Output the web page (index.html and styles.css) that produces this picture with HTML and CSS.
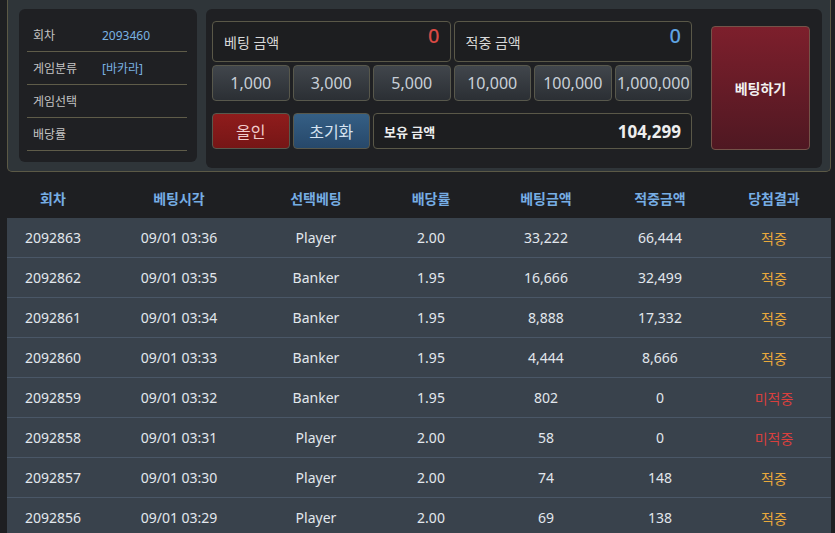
FILE: index.html
```html
<!DOCTYPE html>
<html lang="ko">
  <head>
    <meta charset="UTF-8" />
    <title>베팅</title>
    <link rel="stylesheet" href="styles.css">
  </head>
  <body>
    <div class="wrap">
      <div class="bet-panel">
        <div class="info-box">
          <div class="info-row">
            <span class="info-label">회차</span>
            <span class="info-value">2093460</span>
          </div>
          <div class="info-row">
            <span class="info-label">게임분류</span>
            <span class="info-value">[바카라]</span>
          </div>
          <div class="info-row">
            <span class="info-label">게임선택</span>
            <span class="info-value"></span>
          </div>
          <div class="info-row">
            <span class="info-label">배당률</span>
            <span class="info-value"></span>
          </div>
        </div>
        <div class="bet-box">
          <div class="bet-controls">
            <div class="amount-row">
              <div class="amount-box">
                <span class="amount-label">베팅 금액</span>
                <span class="amount-value red">0</span>
              </div>
              <div class="amount-box">
                <span class="amount-label">적중 금액</span>
                <span class="amount-value blue">0</span>
              </div>
            </div>
            <div class="chip-row">
              <button class="chip">1,000</button>
              <button class="chip">3,000</button>
              <button class="chip">5,000</button>
              <button class="chip">10,000</button>
              <button class="chip">100,000</button>
              <button class="chip">1,000,000</button>
            </div>
            <div class="chip-row action-row">
              <button class="chip all-in">올인</button>
              <button class="chip reset">초기화</button>
              <div class="balance-box">
                <span class="balance-label">보유 금액</span>
                <span class="balance-value">104,299</span>
              </div>
            </div>
          </div>
          <button class="bet-button">베팅하기</button>
        </div>
      </div>

      <table class="history">
        <colgroup>
          <col style="width: 92px" />
          <col style="width: 160px" />
          <col style="width: 114px" />
          <col style="width: 116px" />
          <col style="width: 114px" />
          <col style="width: 114px" />
          <col />
        </colgroup>
        <thead>
          <tr>
            <th>회차</th>
            <th>베팅시각</th>
            <th>선택베팅</th>
            <th>배당률</th>
            <th>베팅금액</th>
            <th>적중금액</th>
            <th>당첨결과</th>
          </tr>
        </thead>
        <tbody>
          <tr><td>2092863</td><td>09/01 03:36</td><td>Player</td><td>2.00</td><td>33,222</td><td>66,444</td><td class="win">적중</td></tr>
          <tr><td>2092862</td><td>09/01 03:35</td><td>Banker</td><td>1.95</td><td>16,666</td><td>32,499</td><td class="win">적중</td></tr>
          <tr><td>2092861</td><td>09/01 03:34</td><td>Banker</td><td>1.95</td><td>8,888</td><td>17,332</td><td class="win">적중</td></tr>
          <tr><td>2092860</td><td>09/01 03:33</td><td>Banker</td><td>1.95</td><td>4,444</td><td>8,666</td><td class="win">적중</td></tr>
          <tr><td>2092859</td><td>09/01 03:32</td><td>Banker</td><td>1.95</td><td>802</td><td>0</td><td class="lose">미적중</td></tr>
          <tr><td>2092858</td><td>09/01 03:31</td><td>Player</td><td>2.00</td><td>58</td><td>0</td><td class="lose">미적중</td></tr>
          <tr><td>2092857</td><td>09/01 03:30</td><td>Player</td><td>2.00</td><td>74</td><td>148</td><td class="win">적중</td></tr>
          <tr><td>2092856</td><td>09/01 03:29</td><td>Player</td><td>2.00</td><td>69</td><td>138</td><td class="win">적중</td></tr>
        </tbody>
      </table>
    </div>
  </body>
</html>
```

FILE: styles.css
```css
body {
  margin: 0;
  background-color: #1e1f22;
  font-family: "Noto Sans", "Noto Sans CJK KR", sans-serif;
  color: #e2e7ed;
  overflow: hidden;
}
.wrap {
  margin: 0 4px 0 7px;
}
.bet-panel {
  display: flex;
  align-items: flex-start;
  gap: 9px;
  background-color: #2f3539;
  border: 1px solid #5b5946;
  border-top: none;
  border-radius: 0 0 5px 5px;
  padding: 9px 8px 3px 11px;
}
.info-box {
  width: 178px;
  box-sizing: border-box;
  height: 153px;
  background-color: #1f2023;
  border-radius: 6px;
  padding: 10px 10px 0 8px;
}
.info-row {
  display: flex;
  align-items: center;
  height: 32px;
  border-bottom: 1px solid #5f5c49;
  font-size: 12px;
}
.info-label {
  width: 69px;
  padding-left: 6px;
  color: #c4c4c4;
}
.info-value {
  color: #79b2e2;
}
.bet-box {
  flex: 1;
  display: flex;
  align-items: flex-start;
  gap: 19px;
  height: 159px;
  box-sizing: border-box;
  background-color: #1f2023;
  border-radius: 6px;
  padding: 12px 12px 0 6px;
}
.bet-controls {
  flex: 1;
}
.amount-row {
  display: grid;
  grid-template-columns: 1fr 1fr;
  gap: 3px;
}
.amount-box {
  display: flex;
  justify-content: space-between;
  height: 41px;
  box-sizing: border-box;
  border: 1px solid #5a5848;
  border-radius: 4px;
  background-color: #1d1e20;
  padding: 0 10px 0 11px;
}
.amount-label {
  align-self: center;
  margin-top: 1px;
  font-size: 14px;
  color: #d8d8d8;
}
.amount-value {
  margin-top: 0;
  font-size: 20px;
  font-weight: 500;
}
.amount-value.red {
  color: #d94a44;
}
.amount-value.blue {
  color: #5fa4e2;
}
.chip-row {
  display: grid;
  grid-template-columns: repeat(6, 1fr);
  gap: 3px;
  margin-top: 3px;
}
.action-row {
  margin-top: 12px;
}
.chip {
  height: 36px;
  border: 1px solid #58584c;
  border-radius: 4px;
  background: linear-gradient(#41464c, #2b2f34);
  color: #c9d0d8;
  font-family: inherit;
  font-size: 16px;
  padding: 0;
  cursor: pointer;
}
.chip.all-in {
  background: linear-gradient(#8f1c1c, #761616);
  color: #f1cccc;
}
.chip.reset {
  background: linear-gradient(#355f85, #27486a);
  color: #d5e3f1;
}
.balance-box {
  grid-column: 3 / 7;
  display: flex;
  align-items: center;
  justify-content: space-between;
  height: 36px;
  box-sizing: border-box;
  border: 1px solid #5a5848;
  border-radius: 4px;
  background-color: #1d1e20;
  padding: 0 10px 0 10px;
}
.balance-label {
  font-size: 13px;
  font-weight: bold;
  color: #eeeeee;
}
.balance-value {
  font-size: 17px;
  font-weight: bold;
  color: #eeeeee;
}
.bet-button {
  width: 99px;
  height: 124px;
  margin-top: 5px;
  border: 1px solid #745349;
  border-radius: 4px;
  background: linear-gradient(#7d1f2c, #4f1822);
  color: #f2f2f2;
  font-family: inherit;
  font-size: 14px;
  font-weight: bold;
  cursor: pointer;
}
.history {
  width: 100%;
  border-collapse: collapse;
  table-layout: fixed;
  font-size: 14px;
  text-align: center;
}
.history th {
  padding: 17px 0 9px;
  line-height: 20px;
  color: #76ade4;
  font-weight: bold;
}
.history td {
  height: 39px;
  padding: 0;
  background-color: #39424c;
  border-bottom: 1px solid #4a5767;
  color: #e2e7ed;
}
.history td.win {
  color: #e9a93c;
}
.history td.lose {
  color: #d8403e;
}
```
